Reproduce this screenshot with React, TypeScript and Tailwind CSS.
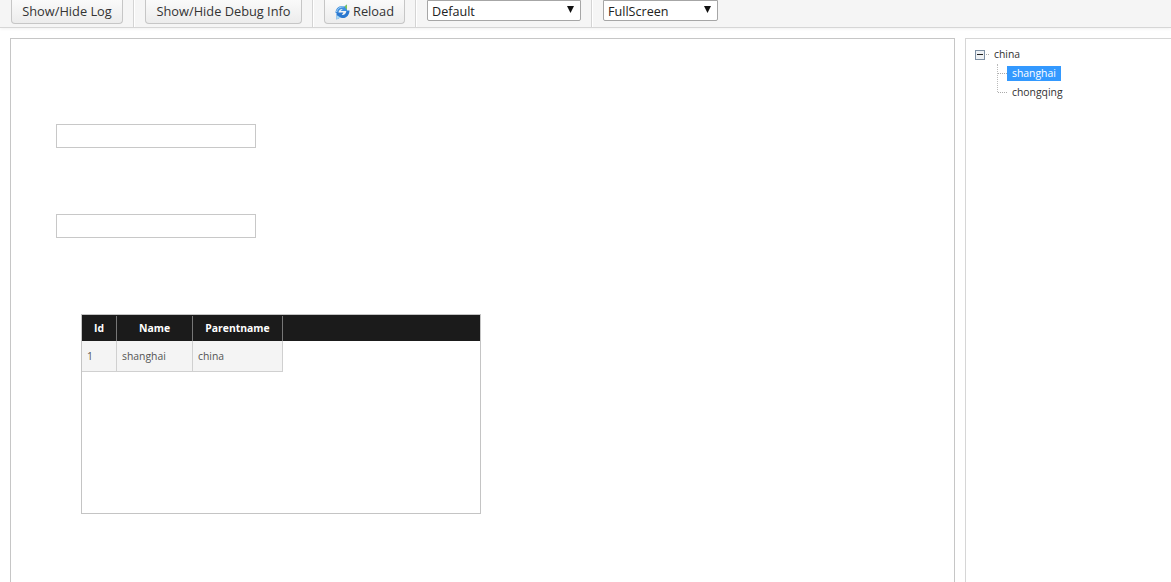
const font = "font-['Open_Sans',sans-serif]";

function ToolButton({ label, icon, className }: { label: string; icon?: React.ReactNode; className: string }) {
  return (
    <button className={`h-[24px] flex items-center justify-center gap-[3px] border border-[#c6c6c6] border-t-0 rounded-b-[4px] bg-gradient-to-b from-[#fafafa] to-[#ececec] text-[12.8px] text-[#333] ${className}`}>
      {icon}
      {label}
    </button>
  );
}

function Separator() {
  return <div className="w-px h-[27px] bg-[#d4d4d4] border-r border-white box-content" />;
}

function ReloadIcon() {
  return (
    <svg width="15" height="16" viewBox="0 0 15 16">
      <path d="M0.5 9C0.5 4 5 0.5 9.5 2.5L12 0.5V7H5.5L7.8 5C5.6 4.6 3.8 6 3.4 9Z" fill="#3d8fe0" />
      <path d="M9.5 2.5L12 0.5V6Z" fill="#7cc45a" />
      <path d="M14.5 6.5C14.5 12 10 15.5 5.5 13.5L1.5 15.5V8.5H8.5L6.8 11C9 11.5 11 10 11.5 6.5Z" fill="#2a78d0" />
      <path d="M5.5 13.5L1.5 15.5V11Z" fill="#a8d8f5" />
      <path d="M1.5 8C2.5 4.5 5 2.5 8.5 3" stroke="#a9d4f7" strokeWidth="1" fill="none" />
    </svg>
  );
}

function SelectBox({ label, className }: { label: string; className: string }) {
  return (
    <div className={`h-[21px] flex items-center justify-between bg-white border border-[#a6a6a6] rounded-b-[2px] pl-[4px] pr-[6px] text-[12.6px] text-[#222] ${className}`}>
      <span className="mt-[3px]">{label}</span>
      <svg width="7" height="7" viewBox="0 0 7 7" className="mb-[2px]">
        <path d="M0 0H7L3.5 7Z" fill="#111" />
      </svg>
    </div>
  );
}

function TreeLines() {
  return <div className="w-[9px] border-t border-dotted border-[#aaa]" />;
}

export default function App() {
  return (
    <div className={`${font} w-[1171px] h-[582px] overflow-hidden bg-white flex flex-col`}>
      <div className="h-[28px] flex items-start bg-[#f5f5f5] border-b border-[#d6d6d6] shadow-[0_1px_3px_rgba(0,0,0,0.06)]">
        <ToolButton label="Show/Hide Log" className="w-[112px] ml-[11px] mr-[10px]" />
        <Separator />
        <ToolButton label="Show/Hide Debug Info" className="w-[157px] ml-[10px] mr-[10px]" />
        <Separator />
        <ToolButton label="Reload" icon={<ReloadIcon />} className="w-[81px] ml-[10px] mr-[10px]" />
        <Separator />
        <SelectBox label="Default" className="w-[154px] ml-[10px] mr-[10px]" />
        <Separator />
        <SelectBox label="FullScreen" className="w-[115px] ml-[10px]" />
      </div>

      <div className="flex flex-1 pt-[10px] pl-[10px] gap-[10px]">
        <div className="w-[945px] h-[560px] border border-[#c6c6c6] border-b-0 pl-[45px] pt-[85px]">
          <div className="w-[200px] h-[24px] border border-[#c8c8c8]" />
          <div className="w-[200px] h-[24px] border border-[#c8c8c8] mt-[66px]" />
          <div className="w-[400px] h-[200px] border border-[#c4c4c4] ml-[25px] mt-[76px]">
            <div className="flex h-[26px] pt-px bg-[#1b1b1b] text-white text-[10.4px] font-bold">
              <div className="w-[35px] border-r border-[#777] flex items-center justify-center">Id</div>
              <div className="w-[76px] border-r border-[#777] flex items-center justify-center">Name</div>
              <div className="w-[90px] border-r border-[#777] flex items-center justify-center">Parentname</div>
            </div>
            <div className="flex h-[31px] w-[201px] bg-[#f4f4f4] border-b border-[#d0d0d0] text-[10.4px] text-[#555]">
              <div className="w-[35px] border-r border-[#d0d0d0] pl-[5px] pt-px flex items-center">1</div>
              <div className="w-[76px] border-r border-[#d0d0d0] pl-[5px] pt-px flex items-center">shanghai</div>
              <div className="w-[90px] border-r border-[#d0d0d0] pl-[5px] pt-px flex items-center">china</div>
            </div>
          </div>
        </div>

        <div className="flex-1 h-[560px] border-l border-t border-[#d6d6d6] pl-[9px] pt-[6px] text-[10.4px] text-[#333]">
          <div className="flex items-center h-[19px]">
            <div className="w-[10px] h-[10px] border border-[#7d8fa3] bg-[#eef1f4] flex items-center justify-center">
              <div className="w-[6px] h-px bg-[#222]" />
            </div>
            <div className="w-[3px] ml-[1px] border-t border-dotted border-[#aaa]" />
            <span className="ml-[5px]">china</span>
          </div>
          <div className="ml-[22px] border-l border-dotted border-[#bbb] h-[28px] flex flex-col">
            <div className="flex items-center h-[19px] shrink-0">
              <TreeLines />
              <span className="bg-[#3399ff] text-white h-[15px] leading-[15px] px-[5px]">shanghai</span>
            </div>
            <div className="flex items-center h-[19px] shrink-0">
              <TreeLines />
              <span className="px-[5px]">chongqing</span>
            </div>
          </div>
        </div>
      </div>
    </div>
  );
}
